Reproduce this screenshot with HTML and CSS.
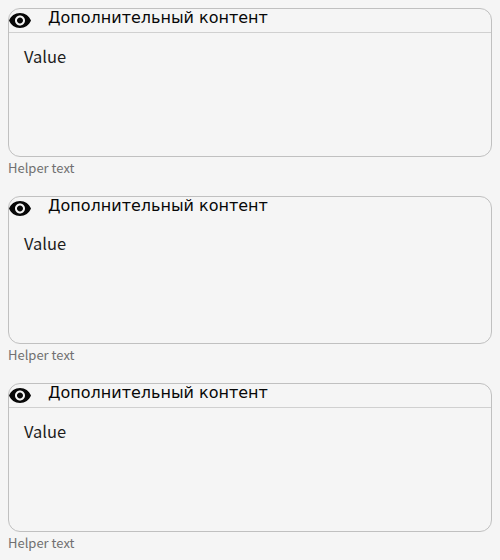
FILE: index.html
```html
<!DOCTYPE html>
<html lang="ru">
<head>
<meta charset="utf-8">
<title>Textarea</title>
<link rel="stylesheet" href="styles.css">
</head>
<body>
<main class="stack">
  <section class="field">
    <div class="box">
      <div class="header divided"><svg class="eye" viewBox="1 1 22 22"><path d="M12 4.500C7 4.500 2.730 7.610 1 12c1.730 4.390 6 7.500 11 7.500s9.270-3.110 11-7.500c-1.730-4.390-6-7.500-11-7.500zM12 17c-2.760 0-5-2.240-5-5s2.240-5 5-5 5 2.240 5 5-2.240 5-5 5zm0-8c-1.660 0-3 1.340-3 3s1.340 3 3 3 3-1.340 3-3-1.340-3-3-3z"/></svg><span>Дополнительный контент</span></div>
      <div class="value">Value</div>
    </div>
    <div class="helper">Helper text</div>
  </section>
  <section class="field">
    <div class="box">
      <div class="header"><svg class="eye" viewBox="1 1 22 22"><path d="M12 4.500C7 4.500 2.730 7.610 1 12c1.730 4.390 6 7.500 11 7.500s9.270-3.110 11-7.500c-1.730-4.390-6-7.500-11-7.500zM12 17c-2.760 0-5-2.240-5-5s2.240-5 5-5 5 2.240 5 5-2.240 5-5 5zm0-8c-1.660 0-3 1.340-3 3s1.340 3 3 3 3-1.340 3-3-1.340-3-3-3z"/></svg><span>Дополнительный контент</span></div>
      <div class="value">Value</div>
    </div>
    <div class="helper">Helper text</div>
  </section>
  <section class="field">
    <div class="box">
      <div class="header divided"><svg class="eye" viewBox="1 1 22 22"><path d="M12 4.500C7 4.500 2.730 7.610 1 12c1.730 4.390 6 7.500 11 7.500s9.270-3.110 11-7.500c-1.730-4.390-6-7.500-11-7.500zM12 17c-2.760 0-5-2.240-5-5s2.240-5 5-5 5 2.240 5 5-2.240 5-5 5zm0-8c-1.660 0-3 1.340-3 3s1.340 3 3 3 3-1.340 3-3-1.340-3-3-3z"/></svg><span>Дополнительный контент</span></div>
      <div class="value">Value</div>
    </div>
    <div class="helper">Helper text</div>
  </section>
</main>
</body>
</html>
```
FILE: styles.css
```css
* { box-sizing: border-box; }
body {
  margin: 0;
  padding: 8px;
  background: #f5f5f5;
  color: #080808;
  font-family: "Noto Sans CJK SC", "Noto Sans", sans-serif;
  overflow: hidden;
}
.stack { display: flex; flex-direction: column; gap: 19.5px; }
.field { height: 168px; }
.box {
  height: 148.5px;
  border: 1px solid #c0c0c0;
  border-radius: 12px;
  overflow: hidden;
}
.header {
  display: flex;
  height: 23px;
  gap: 17px;
  font: 16px/18px "DejaVu Sans", sans-serif;
}
.divided { height: 24px; border-bottom: 1px solid #d0d0d0; }
.eye { width: 22px; height: 23px; flex: none; fill: #080808; }
.value { padding: 12px 15px; font-size: 16.5px; line-height: 22px; color: #1d1d1d; }
.helper { padding-top: 3px; font-size: 13px; line-height: 16px; color: #707070; }
```
